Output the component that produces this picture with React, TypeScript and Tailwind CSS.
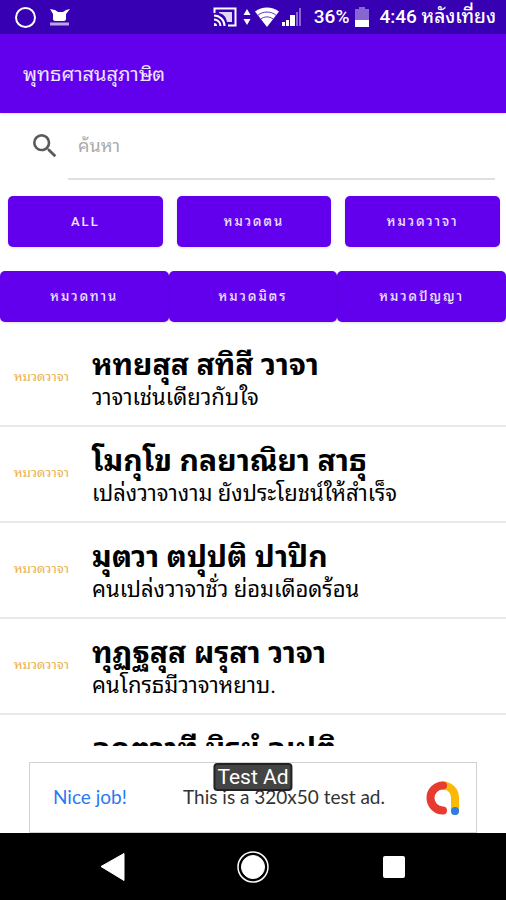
import { useState } from 'react';
import { MdSearch } from 'react-icons/md';

interface Proverb {
  category: string;
  pali: string;
  meaning: string;
}

const proverbs: Proverb[] = [
  { category: 'หมวดวาจา', pali: 'หทยสุส สทิสี วาจา', meaning: 'วาจาเช่นเดียวกับใจ' },
  { category: 'หมวดวาจา', pali: 'โมกุโข กลยาณิยา สาธุ', meaning: 'เปล่งวาจางาม ยังประโยชน์ให้สำเร็จ' },
  { category: 'หมวดวาจา', pali: 'มุตวา ตปุปติ ปาปิก', meaning: 'คนเปล่งวาจาชั่ว ย่อมเดือดร้อน' },
  { category: 'หมวดวาจา', pali: 'ทุฏฐสุส ผรุสา วาจา', meaning: 'คนโกรธมีวาจาหยาบ.' },
  { category: '', pali: 'อภตวาที นิรยํ อุเปติ', meaning: '' },
];

function StatusBar() {
  return (
    <div className="flex h-[34px] shrink-0 items-center bg-[#3700b3] pr-[10px] pl-3 text-white">
      <svg viewBox="0 0 26 26" className="h-[26px] w-[26px]" fill="none" stroke="currentColor" strokeWidth="2">
        <circle cx="13.5" cy="13.5" r="9.5" />
      </svg>
      <svg viewBox="0 0 22 20" className="ml-[11px] h-5 w-[22px]" fill="currentColor">
        <path d="M1 2l5 1 3 2h5l3-2 4-1-4 5v5c0 1-1 2-2 2H6c-1 0-2-1-2-2V7z" />
        <path d="M1 17h19" stroke="currentColor" strokeWidth="3" strokeOpacity="0.65" />
      </svg>
      <div className="ml-auto flex items-center">
        <svg viewBox="0 0 24 20" className="h-5 w-6" fill="none" stroke="currentColor" strokeWidth="2">
          <path d="M1.500 6V1.500h21v17H15" />
          <path d="M6 5h13v10h-5C13 9 10 7 6 6z" fill="currentColor" stroke="none" opacity="0.85" />
          <path d="M1 8.500A10.500 10.500 0 0 1 11.500 19M1 12.500A6.500 6.500 0 0 1 7.500 19" />
          <path d="M1 16a3 3 0 0 1 3 3H1z" fill="currentColor" stroke="none" />
        </svg>
        <svg viewBox="0 0 8 18" className="ml-[6px] h-[18px] w-2" fill="currentColor">
          <path d="M4 1l3.500 6h-7zM4 17l3.500-6h-7z" />
        </svg>
        <svg viewBox="0 0 24 20" className="ml-1 h-5 w-6" fill="currentColor">
          <path d="M0 4.500C7 -1 17 -1 24 4.500L12 20z" />
          <path d="M3 8.200C8 4 16 4 21 8.200M6 12C9 9.200 15 9.200 18 12" fill="none" stroke="#3700b3" strokeWidth="0.8" />
        </svg>
        <svg viewBox="0 0 20 20" className="ml-[3px] h-5 w-5" fill="currentColor">
          <path d="M0 19v-4h3v4zM4 19v-6h3v6zM8 19V8h5v11z" />
          <path d="M14 19V5h2v14zM17 19V1h2v18z" opacity="0.4" />
        </svg>
        <span className="ml-3 text-[19px] font-medium">36%</span>
        <svg viewBox="0 0 14 22" className="ml-[6px] h-[22px] w-[14px]" fill="currentColor">
          <path d="M4 1h6v2h4v18H0V3h4z" opacity="0.4" />
          <path d="M0 14h14v7H0z" />
        </svg>
        <span className="ml-[10px] text-[19px] font-medium whitespace-nowrap">4:46 หลังเที่ยง</span>
      </div>
    </div>
  );
}

const filterClass =
  'h-[51px] flex-1 rounded-[5px] bg-[#6200ee] text-[13px] font-medium tracking-[2px] text-white/90 shadow-sm';

export default function App() {
  const [query, setQuery] = useState<string>('');

  return (
    <div className="flex h-screen flex-col bg-white font-['Roboto','Noto_Sans_Thai_Looped','Noto_Looped_Thai','Loma','Garuda','Waree',sans-serif] text-black">
      <StatusBar />
      <header className="z-10 flex h-[79px] shrink-0 items-center bg-[#6200ee] px-[23px] shadow">
        <h1 className="text-[20px] text-white/90">พุทธศาสนสุภาษิต</h1>
      </header>

      <label className="flex h-[67px] shrink-0 items-start pr-[11px] pl-[29px]">
        <MdSearch className="mt-[17px] h-8 w-8 text-[#5a5a5a]" />
        <input
          type="text"
          aria-label="ค้นหา"
          placeholder="ค้นหา"
          value={query}
          onChange={(e) => setQuery(e.target.value)}
          className="ml-[7px] h-[67px] min-w-0 flex-1 border-b-2 border-[#e0e0e0] px-[10px] text-[18px] outline-none placeholder:text-[#aaaaaa]"
        />
      </label>

      <div className="mt-4 flex shrink-0 gap-[14px] pr-[6px] pl-2">
        <button className={filterClass}>ALL</button>
        <button className={filterClass}>หมวดตน</button>
        <button className={filterClass}>หมวดวาจา</button>
      </div>
      <div className="mt-6 flex shrink-0">
        <button className={filterClass}>หมวดทาน</button>
        <button className={filterClass}>หมวดมิตร</button>
        <button className={filterClass}>หมวดปัญญา</button>
      </div>

      <ul className="mt-[9px] min-h-0 flex-1 overflow-hidden">
        {proverbs.map((item) => (
          <li key={item.pali} className="flex h-24 items-start border-b-2 border-[#e8e8e8] pt-4">
            <span className="mt-5 w-[92px] shrink-0 pl-[14px] text-[13px] text-[#e8b04c]">{item.category}</span>
            <div className="whitespace-nowrap">
              <h2 className="text-[30px] leading-[36px] font-bold">{item.pali}</h2>
              <p className="text-[22px] leading-[30px]">{item.meaning}</p>
            </div>
          </li>
        ))}
      </ul>

      <div className="relative mx-[29px] mt-4 flex h-[71px] shrink-0 items-center border border-[#cfd3d6] pr-[15px] pl-[23px] font-['Lato',sans-serif] text-[19px]">
        <a href="#" className="text-[#2979f2]">Nice job!</a>
        <span className="mr-10 ml-auto text-[#333333]">This is a 320x50 test ad.</span>
        <svg viewBox="0 0 36 36" className="h-9 w-9" fill="none" strokeLinecap="round" strokeWidth="8">
          <path d="M18 5.500a12 12 0 0 1 12 12V31" stroke="#fbb905" />
          <path d="M18 5.500a12.500 12.500 0 0 0 0 25" stroke="#e63b2e" />
          <circle cx="30" cy="31" r="4" fill="#2b7de9" />
        </svg>
        <span className="absolute top-0 left-1/2 -translate-x-1/2 rounded-[4px] border-2 border-[#222222] bg-[#444444] px-[2px] font-['Roboto',sans-serif] text-[21px] leading-6 whitespace-nowrap text-white">
          Test Ad
        </span>
      </div>

      <nav className="flex h-[67px] shrink-0 items-center justify-between bg-black px-[95px] text-white">
        <button aria-label="Back">
          <svg viewBox="0 0 36 36" className="h-9 w-9" fill="currentColor">
            <path d="M6 17.500L29 4.500v27z" stroke="currentColor" strokeLinejoin="round" />
          </svg>
        </button>
        <button aria-label="Home">
          <svg viewBox="0 0 36 36" className="h-9 w-9" fill="none" stroke="currentColor">
            <circle cx="18" cy="18" r="15" strokeWidth="1.500" />
            <circle cx="18" cy="18" r="11.500" fill="currentColor" />
          </svg>
        </button>
        <button aria-label="Recent apps">
          <svg viewBox="0 0 36 36" className="h-9 w-9" fill="currentColor">
            <rect x="8" y="7" width="22" height="22" rx="2" />
          </svg>
        </button>
      </nav>
    </div>
  );
}
